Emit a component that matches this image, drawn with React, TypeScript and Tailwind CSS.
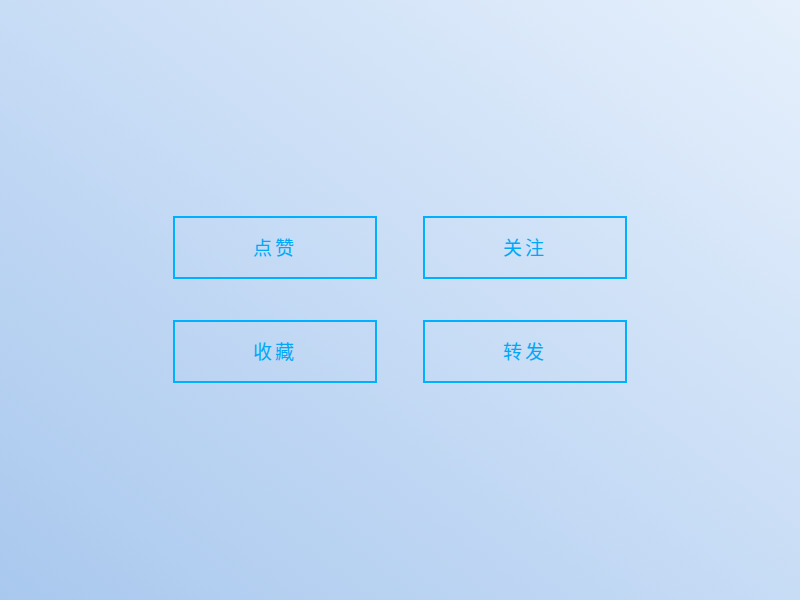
const actions = ['点赞', '关注', '收藏', '转发'];

export default function App() {
  return (
    <div className="flex h-[600px] w-[800px] items-center justify-center bg-gradient-to-tr from-[#a9c8ee] to-[#e6f0fc] pb-[2px] font-['Noto_Sans_CJK_SC',sans-serif]">
      <div className="grid grid-cols-[204px_204px] gap-x-[46px] gap-y-[41px]">
        {actions.map((label) => (
          <button
            key={label}
            className="flex h-[63px] items-center justify-center border-2 border-[#00b0ff] text-[19px] tracking-[3px] text-[#00a8f8]"
          >
            {label}
          </button>
        ))}
      </div>
    </div>
  );
}
